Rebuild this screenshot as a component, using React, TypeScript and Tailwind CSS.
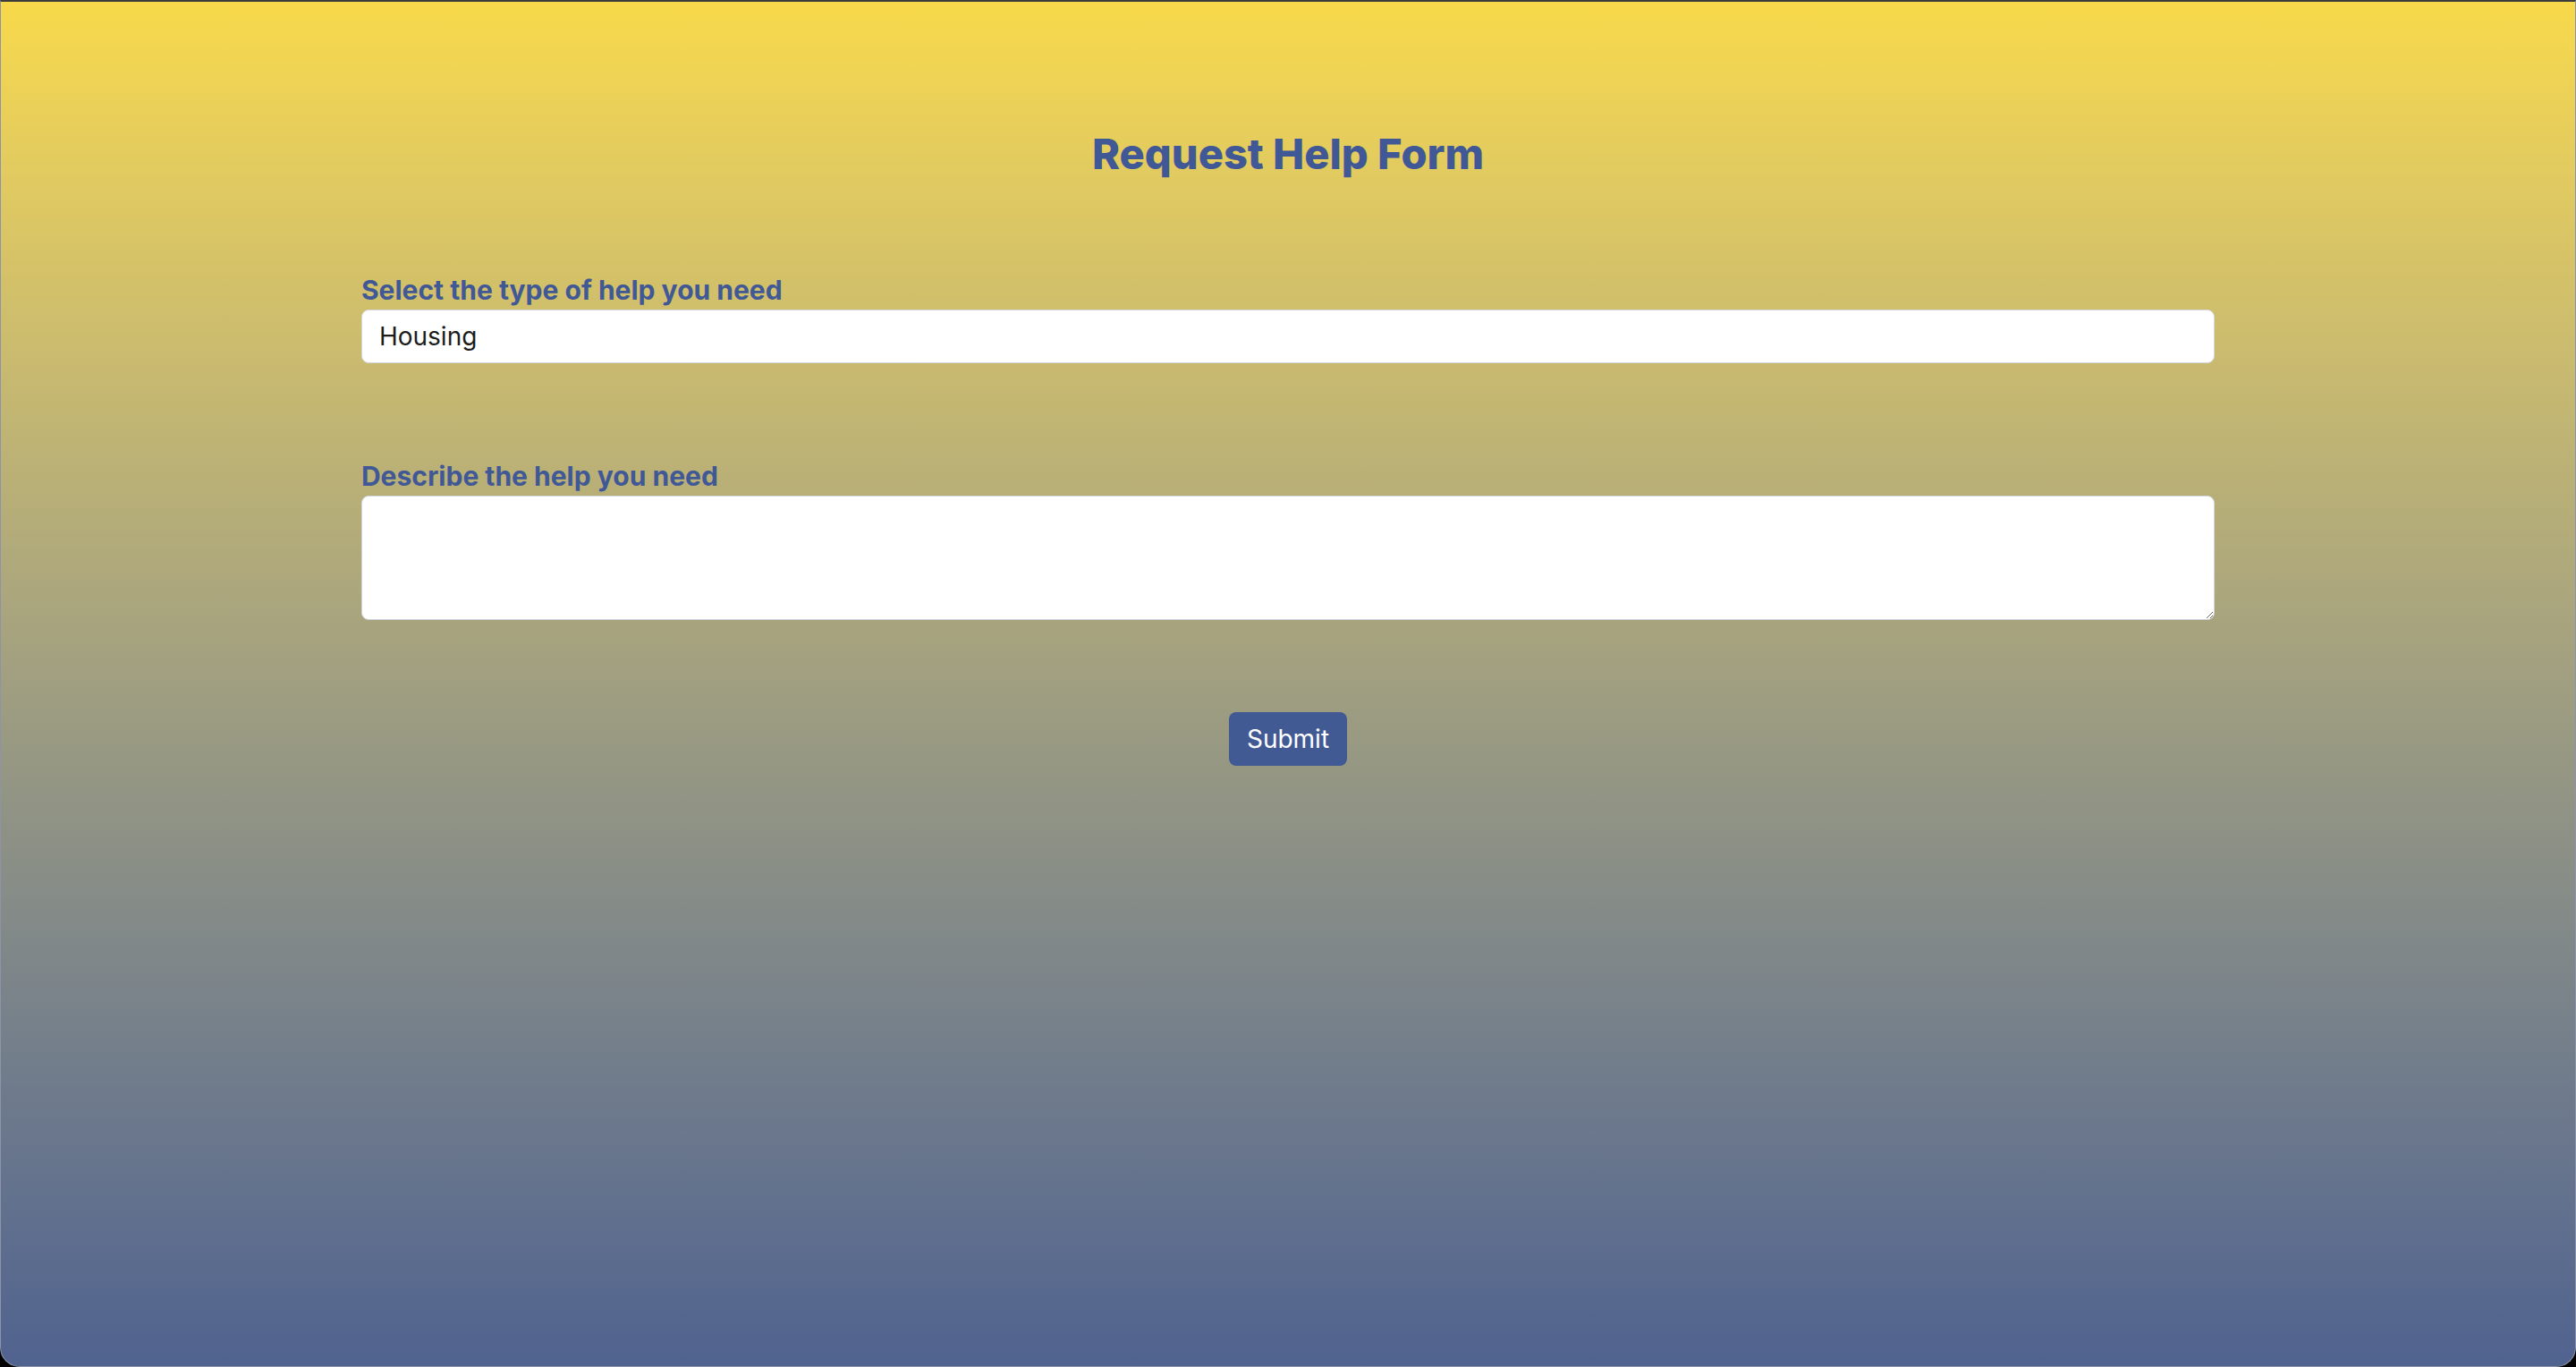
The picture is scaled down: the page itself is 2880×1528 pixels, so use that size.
export default function App() {
    return (
        <div className="h-screen w-full bg-black">
            <div
                className="h-full w-full rounded-b-[22px] border border-t-2 border-[#8d93a8] border-t-[#3c3c3c] bg-gradient-to-b from-[#f8d94a] to-[#50628f]"
                style={{ fontFamily: '"Inter", "Liberation Sans", sans-serif' }}
            >
                <div className="flex flex-col items-center pt-[140px]">
                    <h1 className="text-[47px] font-extrabold leading-[60px] text-[#415896]">Request Help Form</h1>

                    <form className="mt-[102px] flex w-[72%] flex-col">
                        <label className="text-[30px] font-bold leading-[40px] text-[#415896]">
                            Select the type of help you need
                        </label>
                        <select className="mt-[2px] h-[60px] rounded-[8px] border border-[#d3d6de] bg-white px-[19px] text-[28px] text-[#1c1c1c] outline-none appearance-none">
                            <option>Housing</option>
                            <option>Food</option>
                            <option>Healthcare</option>
                        </select>

                        <label className="mt-[106px] text-[30px] font-bold leading-[40px] text-[#415896]">
                            Describe the help you need
                        </label>
                        <textarea className="mt-[2px] h-[139px] rounded-[8px] border border-[#d3d6de] bg-white px-[19px] py-[10px] text-[28px] outline-none" />

                        <div className="mt-[103px] flex justify-center">
                            <button
                                type="button"
                                className="h-[60px] w-[132px] rounded-[8px] bg-[#425a94] text-[28px] text-white"
                            >
                                Submit
                            </button>
                        </div>
                    </form>
                </div>
            </div>
        </div>
    );
}
